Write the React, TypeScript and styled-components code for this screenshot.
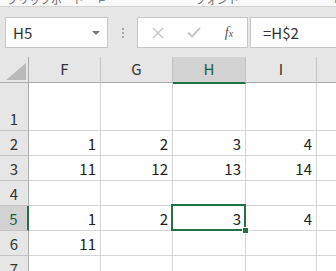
import React, { ReactElement } from "react";
import styled, { createGlobalStyle } from "styled-components";

const GlobalStyle = createGlobalStyle`
  html, body {
    margin: 0;
    padding: 0;
    background: #ffffff;
    overflow: hidden;
  }
  body {
    font-family: "Noto Sans CJK JP", "Liberation Sans", sans-serif;
  }
`;

const cols = ["F", "G", "H", "I", ""];
const colWidths = [72, 72, 73, 71];
const rows: { label: string; values: string[]; tall?: boolean }[] = [
  { label: "1", values: ["", "", "", "", ""], tall: true },
  { label: "2", values: ["1", "2", "3", "4", ""] },
  { label: "3", values: ["11", "12", "13", "14", ""] },
  { label: "4", values: ["", "", "", "", ""] },
  { label: "5", values: ["1", "2", "3", "4", ""] },
  { label: "6", values: ["11", "", "", "", ""] },
  { label: "7", values: ["", "", "", "", ""] },
];
const selCol = 2;
const selRow = 4;

export default function App(): ReactElement {
  return (
    <Main>
      <GlobalStyle />
      <RibbonEdge>
        <RibbonLabel $width={92}>クリップボード</RibbonLabel>
        <RibbonLabel $width={96}>⌐</RibbonLabel>
        <RibbonLabel $width={140}>フォント</RibbonLabel>
        <RibbonLabel $width={8}>⌐</RibbonLabel>
      </RibbonEdge>
      <Toolbar>
        <NameBox>
          <NameText>H5</NameText>
          <DropArrow />
        </NameBox>
        <Grip>
          <span />
          <span />
          <span />
        </Grip>
        <FormulaButtons>
          <ToolIcon>
            <svg width="12" height="12" viewBox="0 0 12 12">
              <path d="M1 1 L11 11 M11 1 L1 11" stroke="#c4c4c4" strokeWidth="1.4" fill="none" />
            </svg>
          </ToolIcon>
          <ToolIcon>
            <svg width="14" height="11" viewBox="0 0 14 11">
              <path d="M1 5.5 L5 9.5 L13 1" stroke="#c4c4c4" strokeWidth="2" fill="none" />
            </svg>
          </ToolIcon>
          <FxIcon>
            f<small>x</small>
          </FxIcon>
        </FormulaButtons>
        <FormulaInput>=H$2</FormulaInput>
      </Toolbar>
      <Sheet>
        <Corner>
          <svg width="20" height="17" viewBox="0 0 20 17">
            <polygon points="20,0 20,17 0,17" fill="#b9b9b9" />
          </svg>
        </Corner>
        {cols.map((c, i) => (
          <ColHeader key={c + i} $selected={i === selCol} $last={i === cols.length - 1}>
            {c}
          </ColHeader>
        ))}
        {rows.map((r, ri) => (
          <React.Fragment key={r.label}>
            <RowHeader $selected={ri === selRow}>{r.label}</RowHeader>
            {r.values.map((v, ci) => (
              <Cell key={ci} $last={ci === cols.length - 1}>
                {v}
                {ri === selRow && ci === selCol && (
                  <Selection>
                    <FillHandle />
                  </Selection>
                )}
              </Cell>
            ))}
          </React.Fragment>
        ))}
      </Sheet>
    </Main>
  );
}

const Main = styled.div`
  width: 336px;
  height: 271px;
  overflow: hidden;
  background: #e6e6e6;
  display: flex;
  flex-direction: column;
`;

const RibbonEdge = styled.div`
  flex: 0 0 auto;
  height: 6px;
  background: #f9f9f9;
  border-bottom: 1px solid #d4d4d4;
  display: flex;
  align-items: flex-end;
  overflow: hidden;
  padding-left: 7px;
`;

const RibbonLabel = styled.div<{ $width: number }>`
  flex: 0 0 ${(p) => p.$width}px;
  font-size: 11px;
  line-height: 11px;
  margin-bottom: 1px;
  color: #666;
  white-space: nowrap;
`;

const Toolbar = styled.div`
  flex: 0 0 50px;
  height: 50px;
  display: flex;
  align-items: flex-start;
  padding: 10px 0 0 5px;
  box-sizing: border-box;
`;

const NameBox = styled.div`
  width: 103px;
  height: 31px;
  box-sizing: border-box;
  background: #fff;
  border: 1px solid #c6c6c6;
  display: flex;
  align-items: center;
  justify-content: space-between;
  padding: 0 7px 0 7px;
`;

const NameText = styled.span`
  font-size: 15px;
  color: #333;
  line-height: 1;
`;

const DropArrow = styled.span`
  width: 0;
  height: 0;
  border-left: 4px solid transparent;
  border-right: 4px solid transparent;
  border-top: 4px solid #777;
`;

const Grip = styled.div`
  width: 29px;
  height: 31px;
  display: flex;
  flex-direction: column;
  align-items: center;
  justify-content: center;
  gap: 2px;
  span {
    width: 2px;
    height: 2px;
    background: #a8a8a8;
  }
`;

const FormulaButtons = styled.div`
  width: 111px;
  height: 31px;
  box-sizing: border-box;
  background: #fff;
  border: 1px solid #c6c6c6;
  display: grid;
  grid-template-columns: 40px 32px 38px;
  align-items: center;
`;

const ToolIcon = styled.span`
  display: flex;
  align-items: center;
  justify-content: center;
`;

const FxIcon = styled.span`
  font-family: "Liberation Serif", serif;
  font-style: italic;
  font-size: 14px;
  color: #555;
  text-align: center;
  small {
    font-size: 10px;
  }
`;

const FormulaInput = styled.div`
  flex: 1;
  margin-left: 2px;
  height: 31px;
  box-sizing: border-box;
  background: #fff;
  border: 1px solid #c6c6c6;
  border-right: none;
  padding-left: 12px;
  display: flex;
  align-items: center;
  font-size: 15px;
  color: #333;
`;

const Sheet = styled.div`
  flex: 1 0 auto;
  background: #fff;
  display: grid;
  grid-template-columns: 29px ${colWidths.map((w) => w + "px").join(" ")} 1fr;
  grid-template-rows: 26px 48px repeat(6, 25px);
  font-size: 15px;
  line-height: 1;
`;

const Corner = styled.div`
  background: #e6e6e6;
  border-right: 1px solid #ababab;
  border-bottom: 1px solid #ababab;
  box-sizing: border-box;
  display: flex;
  align-items: flex-end;
  justify-content: flex-end;
  padding: 0 2px 2px 0;
`;

const ColHeader = styled.div<{ $selected?: boolean; $last?: boolean }>`
  box-sizing: border-box;
  background: ${(p) => (p.$selected ? "#d2d2d2" : "#e6e6e6")};
  border-right: ${(p) => (p.$last ? "none" : "1px solid #c3c3c3")};
  border-bottom: ${(p) => (p.$selected ? "2px solid #217346" : "1px solid #ababab")};
  margin-bottom: ${(p) => (p.$selected ? "-1px" : "0")};
  display: flex;
  align-items: center;
  justify-content: center;
  padding-bottom: 2px;
  color: ${(p) => (p.$selected ? "#1d5e3b" : "#333")};
  font-size: 15px;
  z-index: ${(p) => (p.$selected ? 1 : 0)};
`;

const RowHeader = styled.div<{ $selected?: boolean }>`
  box-sizing: border-box;
  background: ${(p) => (p.$selected ? "#d2d2d2" : "#e6e6e6")};
  border-right: ${(p) => (p.$selected ? "2px solid #217346" : "1px solid #ababab")};
  border-bottom: 1px solid #c3c3c3;
  display: flex;
  align-items: flex-end;
  justify-content: center;
  padding-bottom: 4px;
  color: ${(p) => (p.$selected ? "#1d5e3b" : "#333")};
  font-size: 15px;
`;

const Cell = styled.div<{ $last?: boolean }>`
  position: relative;
  box-sizing: border-box;
  border-right: ${(p) => (p.$last ? "none" : "1px solid #d4d4d4")};
  border-bottom: 1px solid #d4d4d4;
  display: flex;
  align-items: flex-end;
  justify-content: flex-end;
  padding: 0 4px 4px 0;
  color: #222;
  font-size: 15px;
`;

const Selection = styled.div`
  position: absolute;
  left: -2px;
  top: -2px;
  right: -1px;
  bottom: -1px;
  border: 2px solid #217346;
  pointer-events: none;
  z-index: 2;
`;

const FillHandle = styled.div`
  position: absolute;
  right: -5px;
  bottom: -5px;
  width: 5px;
  height: 5px;
  background: #217346;
  border: 1px solid #fff;
`;
